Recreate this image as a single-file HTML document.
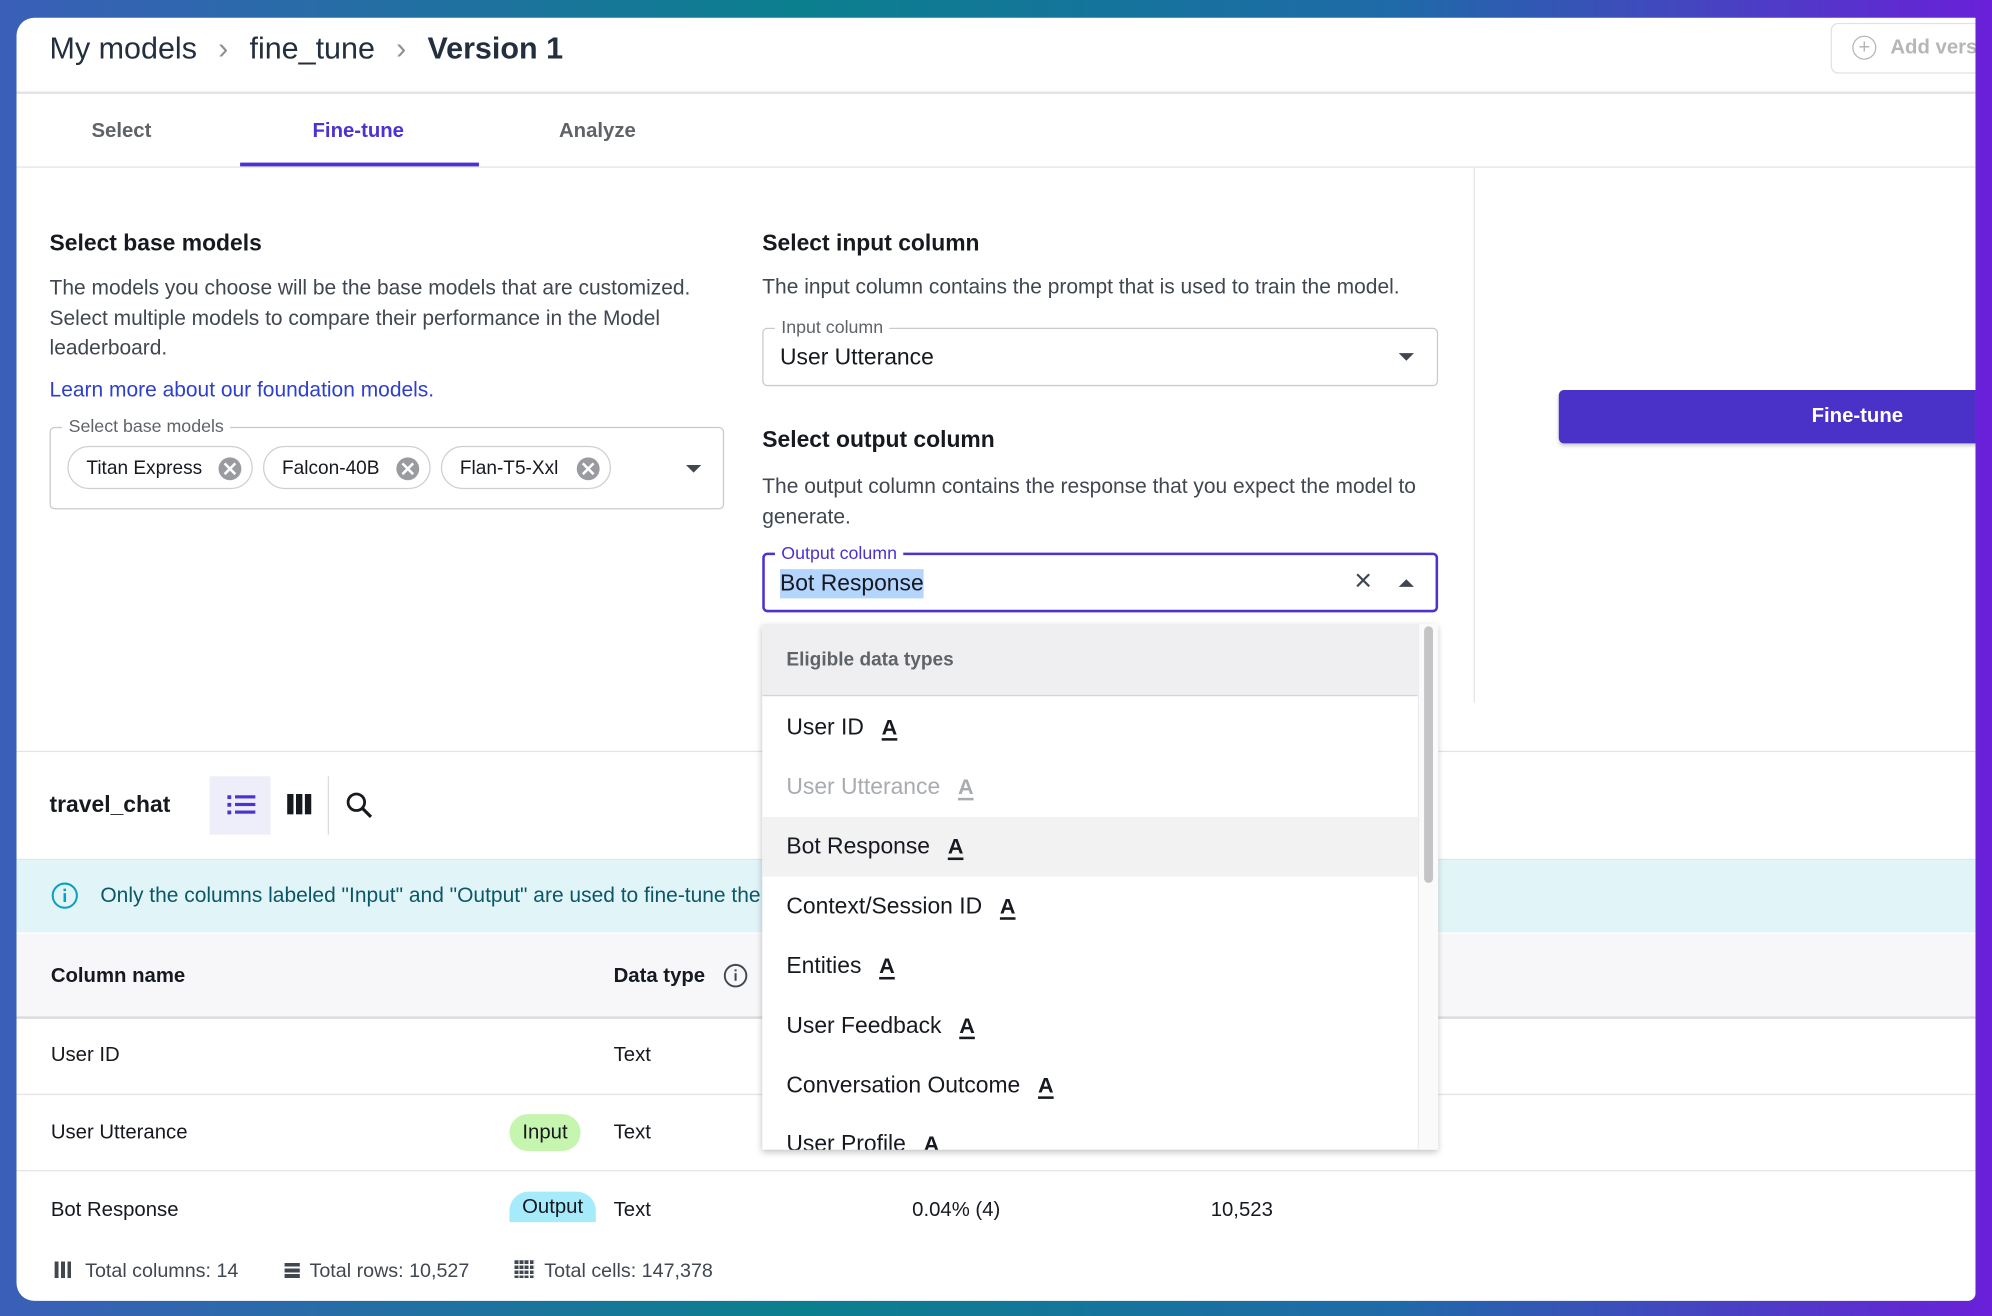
<!DOCTYPE html>
<html><head><meta charset="utf-8">
<style>
html,body{margin:0;padding:0;width:1992px;height:1316px;overflow:hidden;background:#2f62b0;}
#s{position:absolute;left:0;top:0;width:1568px;height:1036px;transform:scale(1.270408);transform-origin:0 0;
background:linear-gradient(90deg,#3a5fb8 0%,#0b7f8e 40%,#1f6aa8 70%,#6a20d8 100%);
font-family:"Liberation Sans",sans-serif;color:#16191f;overflow:hidden;}
#card{position:absolute;left:13px;top:14px;width:1542px;height:1010px;background:#fff;border-radius:14px 0 6px 14px;overflow:hidden;}
.a{position:absolute;white-space:nowrap;}
.hl{position:absolute;left:0;width:1542px;background:#e4e4e6;}
.chip{position:absolute;top:337px;height:34px;border:1px solid #cfcfd3;border-radius:18px;font-size:15px;line-height:34px;padding-left:14px;box-sizing:border-box;}
.chip i{position:absolute;right:8px;top:8px;width:18px;height:18px;border-radius:50%;background:#9a9ba0;}
.chip i:before,.chip i:after{content:"";position:absolute;left:8px;top:3px;width:2px;height:12px;background:#fff;transform:rotate(45deg);}
.chip i:after{transform:rotate(-45deg);}
.item{position:absolute;left:0;width:516px;height:47px;font-size:18px;line-height:47px;padding-left:19px;box-sizing:border-box;}
.A{display:inline-block;margin-left:14px;font-size:17px;font-weight:bold;text-decoration:underline;text-decoration-thickness:2px;text-underline-offset:3px;}
.td{position:absolute;font-size:16px;}
.p{font-size:16.5px;}
</style></head><body>
<div id="s">
<div id="card">
 <div class="a" style="left:26px;top:10px;font-size:24px;line-height:30px;color:#232f3e">My models <span style="color:#8d9096;margin:0 10px">›</span> fine_tune <span style="color:#8d9096;margin:0 10px">›</span> <b>Version 1</b></div>
 <div class="a" style="left:1428px;top:4px;width:130px;height:40px;border:1px solid #e2e2e4;border-radius:6px;box-sizing:border-box;font-size:16px;font-weight:bold;color:#b4b6ba;line-height:38px;padding-left:46px">
  <span style="position:absolute;left:16px;top:9px;width:17px;height:17px;border:1.5px solid #b4b6ba;border-radius:50%;font-weight:normal;line-height:17px;text-align:center;font-size:16px">+</span>Add version</div>
 <div class="hl" style="top:58px;height:2px"></div>
 <div class="a" style="left:59px;top:81px;font-size:16px;font-weight:bold;color:#5f6368">Select</div>
 <div class="a" style="left:233px;top:81px;font-size:16px;font-weight:bold;color:#4a33d1">Fine-tune</div>
 <div class="a" style="left:427px;top:81px;font-size:16px;font-weight:bold;color:#5f6368">Analyze</div>
 <div class="a" style="left:176px;top:114px;width:188px;height:3px;background:#4a33d1"></div>
 <div class="hl" style="top:117px;height:1px"></div>
 <div class="a" style="left:1147px;top:118px;width:1px;height:421px;background:#e4e4e6"></div>
 <div class="a" style="left:26px;top:167px;font-size:18px;font-weight:bold">Select base models</div>
 <div class="a p" style="left:26px;top:202px;line-height:23.5px;color:#414750;white-space:normal;width:525px">The models you choose will be the base models that are customized. Select multiple models to compare their performance in the Model leaderboard.</div>
 <div class="a p" style="left:26px;top:284px;color:#2c3fcf">Learn more about our foundation models.</div>
 <div class="a" style="left:26px;top:322px;width:531px;height:65px;border:1px solid #c9cacd;border-radius:4px;box-sizing:border-box"></div>
 <div class="a" style="left:36px;top:313px;font-size:14px;color:#5f6368;background:#fff;padding:0 5px">Select base models</div>
 <div class="chip" style="left:40px;width:146px">Titan Express<i></i></div>
 <div class="chip" style="left:194px;width:132px">Falcon-40B<i></i></div>
 <div class="chip" style="left:334px;width:134px">Flan-T5-Xxl<i></i></div>
 <div class="a" style="left:527px;top:352px;width:0;height:0;border-left:6px solid transparent;border-right:6px solid transparent;border-top:6px solid #414750"></div>
 <div class="a" style="left:587px;top:167px;font-size:18px;font-weight:bold">Select input column</div>
 <div class="a p" style="left:587px;top:203px;color:#414750">The input column contains the prompt that is used to train the model.</div>
 <div class="a" style="left:587px;top:244px;width:532px;height:46px;border:1px solid #c9cacd;border-radius:4px;box-sizing:border-box"></div>
 <div class="a" style="left:597px;top:235px;font-size:14px;color:#5f6368;background:#fff;padding:0 5px">Input column</div>
 <div class="a" style="left:601px;top:257px;font-size:18px">User Utterance</div>
 <div class="a" style="left:1088px;top:264px;width:0;height:0;border-left:6px solid transparent;border-right:6px solid transparent;border-top:6px solid #414750"></div>
 <div class="a" style="left:587px;top:322px;font-size:18px;font-weight:bold">Select output column</div>
 <div class="a p" style="left:587px;top:357px;line-height:24px;color:#414750;white-space:normal;width:540px">The output column contains the response that you expect the model to generate.</div>
 <div class="a" style="left:587px;top:421px;width:532px;height:47px;border:2px solid #4a33d1;border-radius:4px;box-sizing:border-box"></div>
 <div class="a" style="left:597px;top:413px;font-size:14px;color:#4a33d1;background:#fff;padding:0 5px">Output column</div>
 <div class="a" style="left:601px;top:434px;font-size:18px;background:#b4d5fe;line-height:23px">Bot Response</div>
 <div class="a" style="left:1053px;top:430px;font-size:24px;color:#414750">×</div>
 <div class="a" style="left:1088px;top:442px;width:0;height:0;border-left:6px solid transparent;border-right:6px solid transparent;border-bottom:6px solid #414750"></div>
 <div class="a" style="left:1214px;top:293px;width:470px;height:42px;background:#4a32c8;border-radius:4px 0 0 4px;color:#fff;font-weight:bold;font-size:16px;line-height:42px;text-align:center;box-shadow:0 2px 3px rgba(0,0,0,.2)">Fine-tune</div>
 <div class="hl" style="top:577px;height:1px"></div>
 <div class="a" style="left:26px;top:609px;font-size:18px;font-weight:bold">travel_chat</div>
 <div class="a" style="left:152px;top:597px;width:48px;height:46px;background:#eeeefa"></div>
 <svg class="a" style="left:165px;top:610px" width="24" height="18" viewBox="0 0 24 18"><g fill="#4a33d1"><rect x="1" y="2" width="3" height="3"/><rect x="1" y="8" width="3" height="3"/><rect x="1" y="14" width="3" height="3"/><rect x="7" y="2" width="16" height="2.5"/><rect x="7" y="8" width="16" height="2.5"/><rect x="7" y="14" width="16" height="2.5"/></g></svg>
 <svg class="a" style="left:213px;top:610px" width="22" height="18" viewBox="0 0 22 18"><g fill="#16191f"><rect x="0" y="1" width="5" height="16"/><rect x="7" y="1" width="5" height="16"/><rect x="14" y="1" width="5" height="16"/></g></svg>
 <div class="a" style="left:245px;top:597px;width:1px;height:46px;background:#dcdcde"></div>
 <svg class="a" style="left:258px;top:608px" width="24" height="24" viewBox="0 0 24 24"><circle cx="9.5" cy="9.5" r="6.5" fill="none" stroke="#16191f" stroke-width="2.2"/><line x1="14.5" y1="14.5" x2="21" y2="21" stroke="#16191f" stroke-width="2.5"/></svg>
 <div class="hl" style="top:662px;height:1px"></div>
 <div class="a" style="left:0;top:663px;width:1542px;height:57px;background:#e1f5f8"></div>
 <svg class="a" style="left:27px;top:680px" width="22" height="22" viewBox="0 0 22 22"><circle cx="11" cy="11" r="9.5" fill="none" stroke="#0aa0bf" stroke-width="1.6"/><rect x="10" y="9" width="2" height="7" fill="#0aa0bf"/><rect x="10" y="5.5" width="2" height="2" fill="#0aa0bf"/></svg>
 <div class="a p" style="left:66px;top:682px;color:#0b5767">Only the columns labeled "Input" and "Output" are used to fine-tune the model.</div>
 <div class="a" style="left:0;top:721px;width:1542px;height:65px;background:#f7f7f9;border-bottom:2px solid #dcdcde"></div>
 <div class="a" style="left:27px;top:746px;font-size:16px;font-weight:bold">Column name</div>
 <div class="a" style="left:470px;top:746px;font-size:16px;font-weight:bold">Data type</div>
 <svg class="a" style="left:556px;top:744px" width="20" height="20" viewBox="0 0 20 20"><circle cx="10" cy="10" r="8.5" fill="none" stroke="#414750" stroke-width="1.5"/><rect x="9.2" y="8" width="1.6" height="6" fill="#414750"/><rect x="9.2" y="5" width="1.6" height="1.6" fill="#414750"/></svg>
 <div class="td" style="left:27px;top:808px">User ID</div><div class="td" style="left:470px;top:808px">Text</div>
 <div class="hl" style="top:847px;height:1px"></div>
 <div class="td" style="left:27px;top:869px">User Utterance</div>
 <div class="a" style="left:388px;top:863px;width:56px;height:29px;background:#c5f5ae;border-radius:15px;font-size:16px;line-height:29px;text-align:center">Input</div>
 <div class="td" style="left:470px;top:869px">Text</div>
 <div class="hl" style="top:907px;height:1px"></div>
 <div class="td" style="left:27px;top:930px">Bot Response</div>
 <div class="a" style="left:388px;top:924px;width:68px;height:24px;background:#a6ebfb;border-radius:15px 15px 0 0;font-size:16px;line-height:26px;text-align:center">Output</div>
 <div class="td" style="left:470px;top:930px">Text</div>
 <div class="td" style="left:705px;top:930px">0.04% (4)</div>
 <div class="td" style="left:940px;top:930px">10,523</div>
 <div class="a" style="left:30px;top:978px;font-size:15.5px;color:#414750"><span style="display:inline-block;width:14px;height:13px;background:repeating-linear-gradient(90deg,#414750 0 3px,#fff 3px 5px);margin-right:10px;vertical-align:-1px"></span>Total columns: 14<span style="display:inline-block;width:12px;height:12px;background:repeating-linear-gradient(180deg,#414750 0 3px,#fff 3px 4.5px);margin:0 8px 0 36px;vertical-align:-1px"></span>Total rows: 10,527<span style="display:inline-block;width:16px;height:14px;background:repeating-linear-gradient(90deg,transparent 0 3px,#fff 3px 4px),repeating-linear-gradient(180deg,#414750 0 3px,#fff 3px 4px);margin:0 7px 0 36px;vertical-align:-1px"></span>Total cells: 147,378</div>
 <div class="a" style="left:587px;top:477px;width:532px;height:414px;background:#fff;box-shadow:0 2px 5px rgba(0,0,0,.25);overflow:hidden">
  <div class="a" style="left:0;top:0;width:516px;height:57px;background:#efeff1;border-bottom:1px solid #d5d5d8;font-size:15px;font-weight:bold;color:#5f6368;line-height:57px;padding-left:19px;box-sizing:border-box">Eligible data types</div>
  <div class="item" style="top:58px">User ID<span class="A">A</span></div>
  <div class="item" style="top:105px;color:#a8abb0">User Utterance<span class="A">A</span></div>
  <div class="item" style="top:152px;background:#f2f2f3">Bot Response<span class="A">A</span></div>
  <div class="item" style="top:199px">Context/Session ID<span class="A">A</span></div>
  <div class="item" style="top:246px">Entities<span class="A">A</span></div>
  <div class="item" style="top:293px">User Feedback<span class="A">A</span></div>
  <div class="item" style="top:340px">Conversation Outcome<span class="A">A</span></div>
  <div class="item" style="top:386px">User Profile<span class="A">A</span></div>
  <div class="a" style="left:516px;top:0;width:16px;height:414px;background:#fafafa;border-left:1px solid #ececee"></div>
  <div class="a" style="left:521px;top:2px;width:7px;height:202px;background:#c4c4c6;border-radius:4px"></div>
 </div>
</div>
</div>
</body></html>
